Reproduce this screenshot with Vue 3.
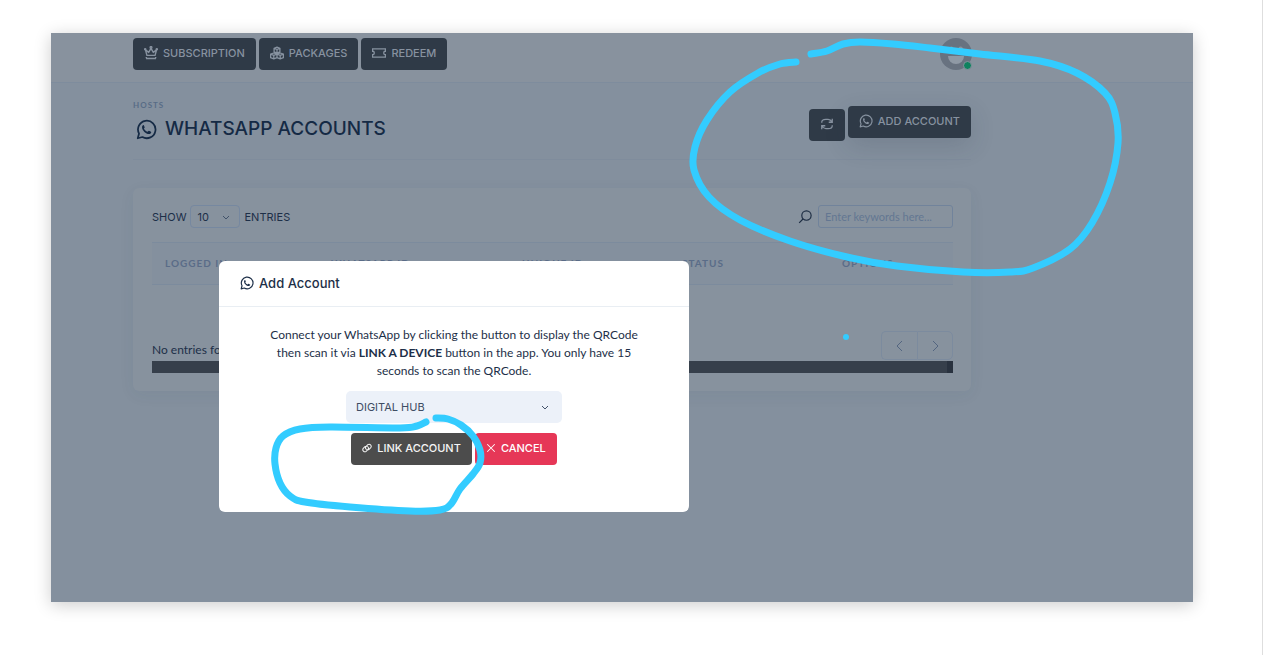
<script setup>
import { ref } from 'vue'

const pageSize = ref('10')
const keywords = ref('')
const hub = ref('DIGITAL HUB')
const columns = ['Logged in', 'WhatsApp ID', 'Unique ID', 'Status', 'Options']

const largeLoop = [
  [796, 62], [780, 64], [758, 73], [730, 92], [707, 120], [695, 147], [694, 170],
  [709, 197], [740, 220], [790, 241], [847, 257], [897, 266], [963, 272], [1010, 272], [1033, 268],
  [1070, 249], [1092, 223], [1110, 183], [1118, 143], [1115, 113], [1105, 93], [1077, 73],
  [1040, 61], [980, 54], [930, 48], [893, 44], [860, 42], [843, 44], [827, 51], [811, 54],
]
const smallLoop = [
  [426, 422], [417, 426], [400, 428], [330, 427], [300, 429], [283, 436], [276, 448], [275, 464],
  [280, 483], [290, 496], [305, 502], [350, 507], [410, 511], [440, 510], [451, 504], [460, 489],
  [473, 474], [480, 463], [480, 450], [473, 436], [461, 425], [448, 419], [436, 418],
]

// Catmull-Rom spline through the points, written as cubic segments.
function smooth(points) {
  let d = `M${points[0][0]} ${points[0][1]}`
  for (let i = 0; i < points.length - 1; i++) {
    const a = points[i - 1] || points[i]
    const b = points[i]
    const c = points[i + 1]
    const e = points[i + 2] || c
    d += `C${b[0] + (c[0] - a[0]) / 6} ${b[1] + (c[1] - a[1]) / 6} ${c[0] - (e[0] - b[0]) / 6} ${c[1] - (e[1] - b[1]) / 6} ${c[0]} ${c[1]}`
  }
  return d
}
</script>

<template>
  <div class="page">
    <svg class="defs" aria-hidden="true">
      <symbol id="whatsapp" viewBox="0 0 24 24">
        <path d="M2 22l1.500-5.300A10 10 0 1 1 7.300 20.600Z" fill="none" stroke="currentColor" stroke-width="2" stroke-linejoin="round" />
        <path d="M8.600 6.800c-.5 0-1.700.9-1.700 2.500 0 3.700 4.500 7.900 7.900 7.900 1.400 0 2.600-1 2.600-2.100 0-.5-.2-.6-2.700-1.700-.6-.2-1 1.300-1.700 1.100-1.700-.6-3-1.900-3.800-3.400-.2-.5.9-1 .7-1.600l-.8-2.200c-.2-.4-.3-.5-.5-.5Z" fill="currentColor" />
      </symbol>
    </svg>

    <main class="stage">
      <header class="topbar">
        <nav class="actions">
          <button class="btn muted" type="button">
            <svg class="icon" viewBox="0 0 24 24" fill="none" stroke="currentColor" stroke-width="2.400" stroke-linejoin="round">
              <path d="M5 16 2.500 6.500 8 11l4-7 4 7 5.500-4.500L19 16ZM4 21v-2M3.500 21.500h17M20 21v-2" />
              <circle cx="12" cy="2.500" r="1.500" /><circle cx="2" cy="5.500" r="1" /><circle cx="22" cy="5.500" r="1" />
            </svg>
            SUBSCRIPTION
          </button>
          <button class="btn muted" type="button">
            <svg class="icon" viewBox="0 0 24 24" fill="none" stroke="currentColor" stroke-width="2.200" stroke-linejoin="round">
              <path d="m12 2 5 2v6l-5 2-5-2V4Zm-5 2 5 2 5-2M12 6v6M6.500 12l5.500 2v6l-5.500 2L1 20v-6Zm-5.500 2 5.500 2 5.500-2M6.500 16v6M17.500 12l5.500 2v6l-5.500 2-5.500-2v-6Zm-5.500 2 5.500 2 5.500-2M17.500 16v6" />
            </svg>
            PACKAGES
          </button>
          <button class="btn muted" type="button">
            <svg class="icon" viewBox="0 0 24 24" fill="none" stroke="currentColor" stroke-width="2.200">
              <path d="M1 5h22v4a3 3 0 0 0 0 6v4H1v-4a3 3 0 0 0 0-6Z" />
            </svg>
            REDEEM
          </button>
        </nav>
        <div class="avatar">
          <svg viewBox="0 0 32 32" aria-hidden="true">
            <circle cx="16" cy="16" r="16" fill="#687280" />
            <path d="M8 12q2-5 5-3l1 4ZM24 12q-2-5-5-3l-1 4Z" fill="#8a94a0" />
            <path d="M8 18h16a8 8 0 0 1-16 0Z" fill="#8f99a5" />
          </svg>
          <span class="online"></span>
        </div>
      </header>

      <section class="content">
        <div class="heading">
          <div>
            <p class="eyebrow">HOSTS</p>
            <h1><svg class="title-icon"><use href="#whatsapp" /></svg>WHATSAPP ACCOUNTS</h1>
          </div>
          <div class="tools">
            <button class="btn muted refresh" type="button" aria-label="Refresh">
              <svg class="icon" viewBox="0 0 24 24" fill="none" stroke="currentColor" stroke-width="2.200">
                <path d="M3 10V9a7 5 0 0 1 7-5h4q4 0 7 5M21 3v6h-6M21 14v1a7 5 0 0 1-7 5h-4q-4 0-7-5M3 21v-6h6" />
              </svg>
            </button>
            <button class="btn muted add" type="button">
              <svg class="icon"><use href="#whatsapp" /></svg>
              ADD ACCOUNT
            </button>
          </div>
        </div>

        <div class="card">
          <div class="filters">
            <label class="length">SHOW
              <span class="pick">
                <select v-model="pageSize"><option>10</option><option>25</option></select>
                <svg viewBox="0 0 10 10"><path d="m2 3 3 3 3-3" /></svg>
              </span>
              ENTRIES
            </label>
            <label class="search">
              <svg viewBox="0 0 24 24" fill="none" stroke="currentColor" stroke-width="2"><circle cx="14.500" cy="9.500" r="8" /><path d="M9 15l-7 7" /></svg>
              <input v-model="keywords" type="text" placeholder="Enter keywords here..." aria-label="Search" />
            </label>
          </div>
          <table>
            <thead>
              <tr><th v-for="c in columns" :key="c" scope="col">{{ c }}</th></tr>
            </thead>
          </table>
          <div class="footer">
            <span>No entries found</span>
            <div class="pager">
              <button type="button" aria-label="Previous"><svg viewBox="0 0 14 14"><path d="M9 2 4 7l5 5" /></svg></button>
              <button type="button" aria-label="Next"><svg viewBox="0 0 14 14"><path d="m5 2 5 5-5 5" /></svg></button>
            </div>
          </div>
          <div class="scrollbar"></div>
        </div>
      </section>

      <div class="modal" role="dialog" aria-labelledby="modal-title">
        <h2 id="modal-title"><svg class="modal-icon"><use href="#whatsapp" /></svg>Add Account</h2>
        <div class="modal-body">
          <p>
            Connect your WhatsApp by clicking the button to display the QRCode<br />
            then scan it via <strong>LINK A DEVICE</strong> button in the app. You only have 15<br />
            seconds to scan the QRCode.
          </p>
          <div class="hub">
            <select v-model="hub" aria-label="Hub"><option>DIGITAL HUB</option></select>
            <svg viewBox="0 0 10 10"><path d="m2 3 3 3 3-3" /></svg>
          </div>
          <div class="choices">
            <button class="btn link" type="button">
              <svg class="small-icon" viewBox="0 0 24 24" fill="none" stroke="currentColor" stroke-width="2.500" stroke-linecap="round">
                <path d="M10 15a5 5 0 0 1 0-7l4-4a5 5 0 0 1 7 7l-4 4a5 5 0 0 1-5 1M14 9a5 5 0 0 1 0 7l-4 4a5 5 0 0 1-7-7l4-4a5 5 0 0 1 5-1" />
              </svg>
              LINK ACCOUNT
            </button>
            <button class="btn cancel" type="button">
              <svg class="small-icon" viewBox="0 0 24 24" fill="none" stroke="currentColor" stroke-width="2.500"><path d="m3 3 18 18M21 3 3 21" /></svg>
              CANCEL
            </button>
          </div>
        </div>
      </div>

      <svg class="ink" viewBox="51 33 1142 569" preserveAspectRatio="xMinYMin meet" aria-hidden="true">
        <path :d="smooth(largeLoop)" />
        <path :d="smooth(smallLoop)" />
        <circle cx="846" cy="337" r="3" />
      </svg>
    </main>
  </div>
</template>

<style>
body { background: #fff; }
</style>

<style scoped>
* { box-sizing: border-box; }
.page {
  min-height: 100vh;
  padding: 33px 69px 53px 51px;
  border-right: 1px solid #dedede;
  margin-right: 2px;
  font-family: Inter, "Liberation Sans", sans-serif;
  font-size: 11px;
  color: #1d2f48;
}
.defs { position: absolute; width: 0; height: 0; }
.stage {
  position: relative;
  min-height: 569px;
  background: #84909e;
  box-shadow: 0 3px 16px rgba(0, 0, 0, 0.2);
}
button, select, input { font: inherit; color: inherit; }
.topbar {
  display: flex;
  justify-content: space-between;
  align-items: flex-start;
  height: 50px;
  padding: 5px 221px 0 82px;
  background: #88929e;
  border-bottom: 1px solid #7e8c9d;
}
.actions { display: flex; gap: 3px; }
.btn {
  display: inline-flex;
  align-items: center;
  justify-content: center;
  gap: 5px;
  height: 32px;
  padding: 0 11px 2px;
  border: 0;
  border-radius: 4px;
  font-weight: 500;
  white-space: nowrap;
}
.muted { background: #2f3a47; color: #8792a0; }
.icon { width: 14px; height: 14px; }
.avatar { position: relative; width: 32px; height: 32px; }
.avatar svg { display: block; width: 32px; height: 32px; }
.online {
  position: absolute;
  right: 0;
  bottom: 0;
  width: 9px;
  height: 9px;
  border: 1px solid #88929e;
  border-radius: 50%;
  background: #0e825f;
}
.content { padding: 16px 222px 0 82px; }
.heading {
  display: flex;
  justify-content: space-between;
  height: 61px;
  border-bottom: 1px solid #7f8c9c;
}
.eyebrow {
  margin: 0;
  font-family: Lato, sans-serif;
  font-size: 8px;
  font-weight: 700;
  line-height: 12px;
  letter-spacing: 1px;
  color: #586c86;
}
h1 {
  display: flex;
  align-items: center;
  gap: 8px;
  margin: 5px 0 0 3px;
  font-size: 19px;
  line-height: 26px;
  font-weight: 500;
  color: #152a45;
}
.title-icon { width: 21px; height: 21px; }
.tools { display: flex; align-items: flex-start; gap: 3px; padding-top: 7px; }
.refresh { width: 36px; margin-top: 3px; }
.add { box-shadow: 0 8px 24px rgba(35, 50, 70, 0.16); }
.card {
  margin-top: 28px;
  padding: 17px 18px 18px 19px;
  border-radius: 6px;
  background: #87929e;
  box-shadow: 0 4px 16px rgba(40, 60, 90, 0.06);
}
.filters { display: flex; justify-content: space-between; align-items: center; }
.length { display: flex; align-items: center; gap: 4px; }
.pick { position: relative; display: block; }
.pick select {
  display: block;
  width: 50px;
  height: 23px;
  padding: 0 6px;
  appearance: none;
  border: 1px solid #7688a0;
  border-radius: 4px;
  background: transparent;
}
.pick svg, .hub svg {
  position: absolute;
  right: 9px;
  top: 50%;
  width: 10px;
  height: 10px;
  margin-top: -4px;
  fill: none;
  stroke: #41526a;
  pointer-events: none;
}
.search { display: flex; align-items: center; gap: 6px; }
.search svg { width: 14px; height: 14px; color: #1c2c42; }
.search input {
  width: 135px;
  height: 23px;
  padding: 0 6px;
  border: 1px solid #71839b;
  border-radius: 3px;
  background: transparent;
  font-family: Lato, sans-serif;
}
.search input::placeholder { color: #637792; opacity: 1; }
table {
  width: 100%;
  margin-top: 14px;
  table-layout: fixed;
  border-collapse: collapse;
}
th {
  width: 160px;
  height: 42px;
  padding: 0 13px 2px;
  border-top: 1px solid #7c8b9d;
  border-bottom: 1px solid #7c8b9d;
  background: #84909e;
  text-align: left;
  text-transform: uppercase;
  font-family: Lato, sans-serif;
  font-size: 10px;
  font-weight: 700;
  letter-spacing: 1px;
  color: #5a6c88;
}
th:nth-child(1) { width: 166px; }
th:nth-child(2) { width: 191px; }
th:last-child { width: auto; }
.footer { display: flex; justify-content: space-between; align-items: center; margin-top: 46px; padding-bottom: 1px; }
.footer span { padding-top: 8px; font-family: Lato, sans-serif; font-size: 12px; }
.pager { display: flex; }
.pager button {
  width: 36px;
  height: 29px;
  padding: 0;
  border: 1px solid #7c8b9e;
  border-radius: 0 5px 5px 0;
  background: transparent;
}
.pager button:first-child { border-right: 0; border-radius: 5px 0 0 5px; }
.pager svg { display: block; width: 14px; height: 14px; margin: 0 auto; fill: none; stroke: #536580; }
.scrollbar { height: 12px; background: #363f4b; border-right: 6px solid #29323f; }
.modal {
  position: absolute;
  left: 168px;
  top: 228px;
  width: 470px;
  min-height: 251px;
  border-radius: 6px;
  background: #fff;
}
h2 {
  display: flex;
  align-items: center;
  gap: 5px;
  height: 46px;
  margin: 0;
  padding: 0 21px 2px;
  border-bottom: 1px solid #e9eef3;
  font-size: 13px;
  font-weight: 500;
}
.modal-icon { width: 14px; height: 14px; }
.modal-body { padding: 19px 20px 47px; text-align: center; }
.modal-body p { margin: 0; font-family: Lato, sans-serif; font-size: 12px; line-height: 18px; white-space: nowrap; }
strong { font-weight: 700; }
.hub { position: relative; width: 216px; margin: 11px auto 0; }
.hub select {
  display: block;
  width: 100%;
  height: 32px;
  padding: 0 10px;
  appearance: none;
  border: 0;
  border-radius: 5px;
  background: #ecf1f9;
  color: #3e4d63;
}
.hub svg { right: 12px; stroke-width: 1; }
.choices { display: flex; justify-content: center; gap: 3px; margin-top: 10px; }
.small-icon { width: 10px; height: 10px; }
.link { background: #4c4c4c; color: #f4f4f4; }
.cancel { background: #e63757; color: #fff; }
.ink { position: absolute; inset: 0; width: 100%; pointer-events: none; }
.ink path { fill: none; stroke: #33ccff; stroke-width: 7; stroke-linecap: round; }
.ink circle { fill: #33ccff; }
</style>
